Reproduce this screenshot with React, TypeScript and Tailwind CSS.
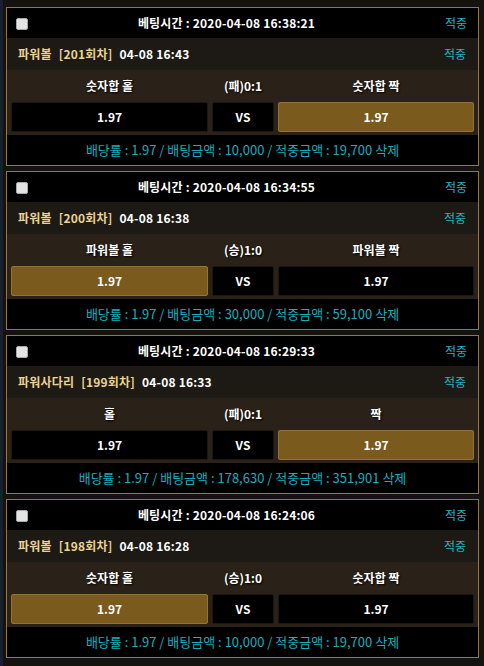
import React from "react";

type Bet = {
  time: string;
  game: string;
  round: string;
  at: string;
  left: string;
  mid: string;
  right: string;
  pick: "left" | "right";
  amount: string;
  win: string;
};

const bets: Bet[] = [
  { time: "2020-04-08 16:38:21", game: "파워볼", round: "[201회차]", at: "04-08 16:43", left: "숫자합 홀", mid: "(패)0:1", right: "숫자합 짝", pick: "right", amount: "10,000", win: "19,700" },
  { time: "2020-04-08 16:34:55", game: "파워볼", round: "[200회차]", at: "04-08 16:38", left: "파워볼 홀", mid: "(승)1:0", right: "파워볼 짝", pick: "left", amount: "30,000", win: "59,100" },
  { time: "2020-04-08 16:29:33", game: "파워사다리", round: "[199회차]", at: "04-08 16:33", left: "홀", mid: "(패)0:1", right: "짝", pick: "right", amount: "178,630", win: "351,901" },
  { time: "2020-04-08 16:24:06", game: "파워볼", round: "[198회차]", at: "04-08 16:28", left: "숫자합 홀", mid: "(승)1:0", right: "숫자합 짝", pick: "left", amount: "10,000", win: "19,700" },
];

const OddsCell = ({ active, children }: { active?: boolean; children: React.ReactNode }) => (
  <div
    className={
      active
        ? "flex h-[30px] items-center justify-center rounded-[2px] border border-[#94733a] bg-[#7a5a1d] text-white"
        : "flex h-[30px] items-center justify-center rounded-[2px] border border-[#1c1712] bg-black text-white"
    }
  >
    {children}
  </div>
);

const BetCard = ({ bet }: { bet: Bet }) => (
  <div className="border border-[#9c7636] bg-black">
    {/* header */}
    <div className="relative flex h-[30px] items-center justify-center bg-black pr-[32px]">
      <span className="absolute left-[9px] top-[10px] h-[12px] w-[12px] rounded-[2px] border border-[#a8a8a8] bg-[#e4e4e4]" />
      <span className="text-[12px] font-bold tracking-[0.2px] text-white">베팅시간 : {bet.time}</span>
      <span className="absolute right-[11px] text-[12px] text-[#1fb4c4]">적중</span>
    </div>
    {/* game title */}
    <div className="flex h-[32px] items-center justify-between bg-[#1d1a15] pl-[11px] pr-[12px]">
      <div className="flex items-center gap-[7px] text-[12px] font-bold tracking-[0.2px]">
        <span className="text-[#ead393]">{bet.game}</span>
        <span className="text-[#ead393]">{bet.round}</span>
        <span className="text-white">{bet.at}</span>
      </div>
      <span className="text-[12px] text-[#1fb4c4]">적중</span>
    </div>
    {/* picks */}
    <div className="bg-[#2a2118] px-[4px] pb-[3px]">
      <div className="grid h-[32px] grid-cols-[197px_62px_1fr] items-center gap-[4px] text-[12px] font-bold text-white [text-shadow:1px_1px_2px_#000]">
        <span className="text-center">{bet.left}</span>
        <span className="text-center">{bet.mid}</span>
        <span className="text-center">{bet.right}</span>
      </div>
      <div className="grid grid-cols-[197px_62px_1fr] gap-[4px] text-[12px] font-bold">
        <OddsCell active={bet.pick === "left"}>1.97</OddsCell>
        <OddsCell>VS</OddsCell>
        <OddsCell active={bet.pick === "right"}>1.97</OddsCell>
      </div>
    </div>
    {/* summary */}
    <div className="flex h-[30px] items-center justify-center bg-black text-[13px] text-[#18aebf]">
      배당률 : 1.97 / 배팅금액 : {bet.amount} / 적중금액 : {bet.win} 삭제
    </div>
  </div>
);

export default function App() {
  return (
    <div
      className="min-h-[666px] w-[484px] border-l-[3px] border-[#18202e] bg-[#15130f] pl-[3px] pr-[5px] pt-[7px]"
      style={{ fontFamily: '"Noto Sans CJK KR", "Noto Sans", sans-serif' }}
    >
      <div className="flex flex-col gap-[5px]">
        {bets.map((bet) => (
          <BetCard key={bet.round} bet={bet} />
        ))}
      </div>
    </div>
  );
}
